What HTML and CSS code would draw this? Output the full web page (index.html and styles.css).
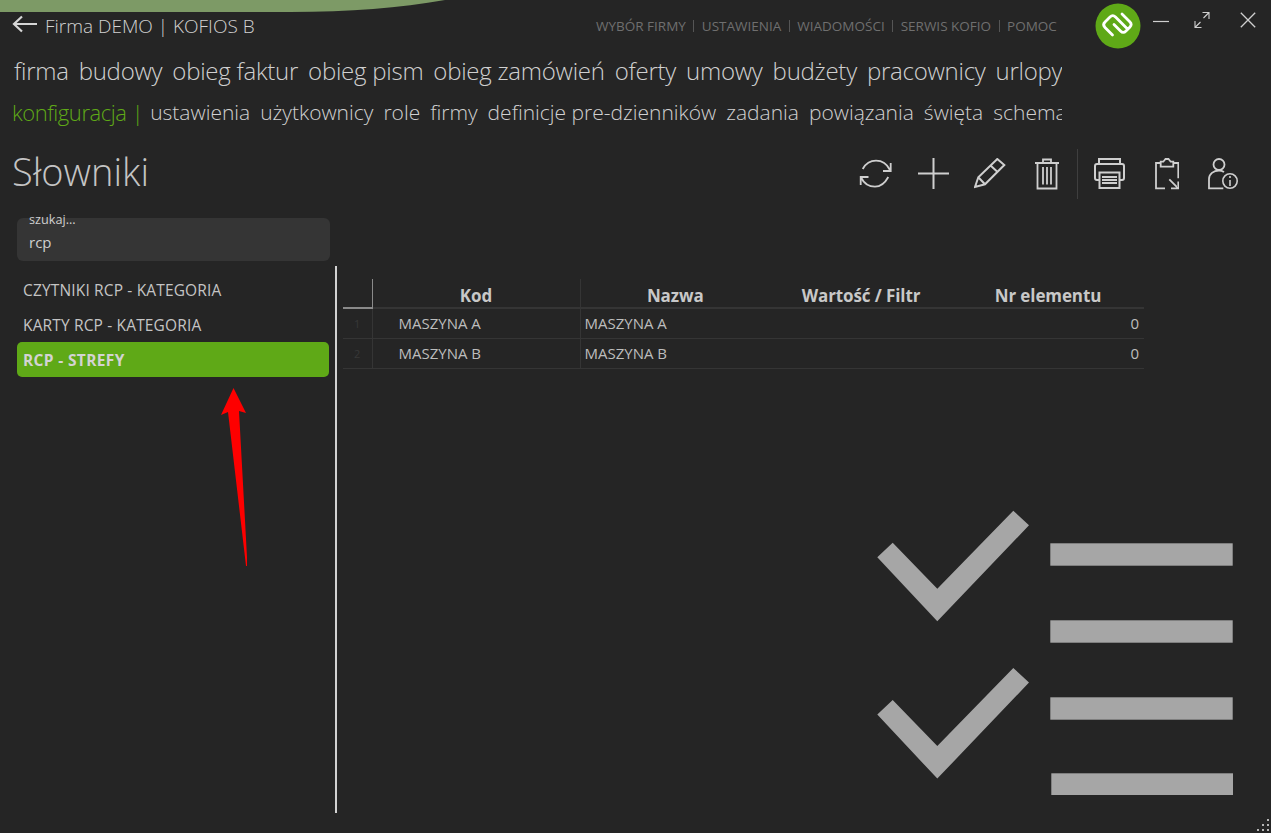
FILE: index.html
```html
<!DOCTYPE html>
<html lang="pl">
<head>
    <meta charset="UTF-8">
    <title>Słowniki</title>
    <link rel="stylesheet" href="styles.css">
</head>
<body>
    <div class="app">
        <svg class="top-arc" viewBox="0 0 445 12" width="445" height="12">
            <path d="M0 0H445C400 8 350 12 290 12H0Z" fill="#7d9a66"/>
        </svg>

        <header class="title-bar">
            <div class="company">
                <svg class="back-icon" viewBox="0 0 26 18" width="26" height="18">
                    <path d="M25 9H2M10 1.500 2 9l8 7.500" fill="none" stroke="#d6d6d6" stroke-width="2.200"/>
                </svg>
                <span class="company-name">Firma DEMO | KOFIOS B</span>
            </div>
            <nav class="top-links">
                <a>WYBÓR FIRMY</a><i></i>
                <a>USTAWIENIA</a><i></i>
                <a>WIADOMOŚCI</a><i></i>
                <a>SERWIS KOFIO</a><i></i>
                <a>POMOC</a>
            </nav>
            <div class="logo">
                <svg viewBox="0 0 46 46" width="46" height="46">
                    <circle cx="23" cy="23" r="22.500" fill="#5fa917"/>
                    <path d="M17.500 32 10 24.500Q7.250 21.750 10 19L15 14Q17.750 11.250 20.500 14L32 25.500M19 21.500 25.500 28Q28.250 30.750 31 28L34.750 24.250Q37.500 21.500 34.750 18.750L27 11" fill="none" stroke="#fff" stroke-width="2.800" stroke-linecap="round"/>
                </svg>
            </div>
            <div class="window-btns">
                <svg viewBox="0 0 16 16" width="16" height="16"><path d="M0 9.500H16" stroke="#cfcfcf" stroke-width="1.200"/></svg>
                <svg viewBox="0 0 16 16" width="16" height="16"><path d="M1 9v6.500h6.500M15 7V.5H8.500M1.500 15l5-5M14.500 1l-5 5" fill="none" stroke="#cfcfcf" stroke-width="1.100"/></svg>
                <svg class="btn-close" viewBox="0 0 16 16" width="16" height="16"><path d="M.8.8l14.400 14.400M15.200.8.8 15.200" stroke="#cfcfcf" stroke-width="1.300"/></svg>
            </div>
        </header>

        <nav class="menu menu-main">
            <a>firma</a><a>budowy</a><a>obieg faktur</a><a>obieg pism</a><a>obieg zamówień</a><a>oferty</a><a>umowy</a><a>budżety</a><a>pracownicy</a><a>urlopy</a>
        </nav>
        <nav class="menu menu-sub">
            <span class="menu-current">konfiguracja |</span><a>ustawienia</a><a>użytkownicy</a><a>role</a><a>firmy</a><a>definicje pre-dzienników</a><a>zadania</a><a>powiązania</a><a>święta</a><a>schematy</a>
        </nav>

        <div class="page-head">
            <h1>Słowniki</h1>
            <div class="toolbar">
                <svg class="tool-refresh" viewBox="0 0 33 32" width="33" height="32"><path d="M3.700 11C7 5 12 2.700 17 2.700 23 2.700 28 6 31 12M31.700 5V13H24M29.300 19C26 25 21 28.700 16 28.700 10 28.700 5 25.500 2 19.500M1.700 27V19H9.500" fill="none" stroke="#cfcfcf" stroke-width="1.800"/></svg>
                <svg class="tool-add" viewBox="0 0 31 32" width="31" height="32"><path d="M15.500 0V31M0 15.500H31" stroke="#cfcfcf" stroke-width="2"/></svg>
                <svg class="tool-edit" viewBox="0 0 32 32" width="32" height="32"><path d="M1 29 4.300 19.300 23.300 1 30.300 7 11 26.300ZM4.300 19.300 11 26.300M16 7 23.300 13.700" fill="none" stroke="#cfcfcf" stroke-width="2"/></svg>
                <svg class="tool-delete" viewBox="0 0 24 32" width="24" height="32"><path d="M0 5H24M8 5V1.500H16V5M2.500 5V30.500H21.500V5M8 9V26.500M12 9V26.500M16 9V26.500" fill="none" stroke="#cfcfcf" stroke-width="1.800"/></svg>
                <span class="toolbar-sep"></span>
                <svg class="tool-print" viewBox="0 0 31 32" width="31" height="32"><path d="M5 6V1H26V6M5 22H3A2 2 0 0 1 1 20V8A2 2 0 0 1 3 6H28A2 2 0 0 1 30 8V20A2 2 0 0 1 28 22H26M5.500 14.500H25.500V30H5.500ZM8 19H23M8 22H23M8 25H23" fill="none" stroke="#cfcfcf" stroke-width="2"/></svg>
                <svg class="tool-export" viewBox="0 0 24 32" width="24" height="32"><path d="M5.700 5H1V30.300H10M18.300 5H23.300V20.300M5.700 8.700V3.700H8.300L10.500 1H13.500L15.700 3.700H18.300V8.700ZM14.300 21.300 23.300 30.300M23.300 23.500V30.300H16" fill="none" stroke="#cfcfcf" stroke-width="1.800"/></svg>
                <svg class="tool-user" viewBox="0 0 30 32" width="30" height="32"><circle cx="11" cy="6.500" r="5.500" fill="none" stroke="#cfcfcf" stroke-width="1.800"/><path d="M15.300 30.300H1V21C1 16 5.500 12.500 11 12.500 13 12.500 14.500 13 16 14" fill="none" stroke="#cfcfcf" stroke-width="1.800"/><circle cx="22" cy="23" r="7.200" fill="none" stroke="#cfcfcf" stroke-width="1.600"/><path d="M22 22V28M22 18V20" stroke="#cfcfcf" stroke-width="1.600"/></svg>
            </div>
        </div>

        <main class="content">
            <div class="search">
                <label>szukaj...</label>
                <span class="search-value">rcp</span>
            </div>
            <div class="panels">
                <ul class="dict-list">
                    <li>CZYTNIKI RCP - KATEGORIA</li>
                    <li>KARTY RCP - KATEGORIA</li>
                    <li class="active">RCP - STREFY</li>
                </ul>
                <div class="divider"></div>
                <section class="grid-area">
                    <table class="grid">
                        <thead>
                            <tr>
                                <th class="col-num"></th>
                                <th class="col-kod">Kod</th>
                                <th class="col-nazwa">Nazwa</th>
                                <th class="col-wartosc">Wartość / Filtr</th>
                                <th class="col-nr">Nr elementu</th>
                            </tr>
                        </thead>
                        <tbody>
                            <tr><td class="col-num">1</td><td class="cell-kod">MASZYNA A</td><td>MASZYNA A</td><td></td><td class="cell-nr">0</td></tr>
                            <tr><td class="col-num">2</td><td class="cell-kod">MASZYNA B</td><td>MASZYNA B</td><td></td><td class="cell-nr">0</td></tr>
                        </tbody>
                    </table>
                </section>
            </div>
        </main>

        <!-- decoration in the corner of the window -->
        <svg class="watermark" viewBox="0 0 356 286" width="356" height="286">
            <path d="M.3 47.300 15.700 32.700 60.300 78.700 136.300.7 152 15.300 60.300 111.300ZM.3 204.600 15.700 190 60.300 236 136.300 158 152 172.600 60.300 268.600Z" fill="#a6a6a6"/>
            <rect x="173.300" y="33.300" width="182.400" height="22.400" fill="#a6a6a6"/>
            <rect x="173.300" y="110.300" width="182.400" height="22.400" fill="#a6a6a6"/>
            <rect x="173.300" y="187.300" width="182.400" height="22.400" fill="#a6a6a6"/>
            <rect x="174.300" y="263.300" width="181.700" height="21.700" fill="#a6a6a6"/>
        </svg>

        <svg class="arrow" viewBox="0 0 26 180" width="26" height="180">
            <path d="M12.500 0 25 25 18 23 26.500 178 25 178 7 24 0 27z" fill="#fe0000"/>
        </svg>

        <svg class="resize-grip" viewBox="0 0 14 14" width="14" height="14">
            <path d="M11 2h2v2h-2zM6 7h2v2H6zM11 7h2v2h-2zM1 12h2v2H1zM6 12h2v2H6zM11 12h2v2h-2z" fill="#b5b5b5"/>
        </svg>
    </div>
</body>
</html>
```

FILE: styles.css
```css
* {
    box-sizing: border-box;
}
html, body {
    margin: 0;
    height: 100%;
}
body {
    font-family: 'Open Sans', 'Noto Sans', sans-serif;
    background-color: #252525;
    color: #cfcfcf;
}
.app {
    position: relative;
    width: 1271px;
    height: 833px;
    overflow: hidden;
    background-color: #252525;
}
.top-arc {
    position: absolute;
    left: 0;
    top: 0;
}
.title-bar {
    display: flex;
    align-items: flex-start;
    height: 51px;
    padding-top: 3px;
}
.company {
    display: flex;
    align-items: center;
    width: 590px;
    height: 46px;
    padding-left: 12px;
}
.back-icon {
    margin-top: -5px;
}
.company-name {
    margin-left: 7px;
    font-size: 19px;
    font-weight: 300;
    color: #d2d2d2;
}
.top-links {
    display: flex;
    align-items: center;
    width: 505px;
    height: 46px;
    padding-left: 6px;
    font-size: 13.500px;
    color: #6f6f6f;
}
.top-links i {
    width: 1px;
    height: 12px;
    margin: 0 7.500px;
    background-color: #555;
}
.logo {
    height: 46px;
}
.window-btns {
    display: flex;
    gap: 25px;
    padding: 9px 0 0 12px;
}
.btn-close {
    margin-left: 5px;
}
.menu {
    display: flex;
    gap: 10px;
    width: 1062px;
    white-space: nowrap;
    overflow: hidden;
    font-weight: 300;
    line-height: 40px;
    color: #d0d0d0;
}
.menu-main {
    height: 41px;
    padding-left: 14px;
    font-size: 24px;
    letter-spacing: -0.25px;
}
.menu-sub {
    height: 40px;
    padding-left: 12px;
    font-size: 21px;
}
.menu-current {
    margin-right: -3px;
    color: #5fa917;
    font-size: 22px;
    letter-spacing: -0.45px;
}
.page-head {
    display: flex;
    justify-content: space-between;
    height: 86px;
    padding: 17px 0 0 12px;
}
h1 {
    margin: -2px 0 0;
    font-size: 38px;
    font-weight: 300;
    line-height: 48px;
    color: #c4c4c4;
}
.toolbar {
    display: flex;
    align-items: center;
    height: 50px;
    padding-right: 33px;
}
.tool-add {
    margin-left: 26px;
}
.tool-edit {
    margin-left: 25px;
}
.tool-delete {
    margin-left: 29px;
}
.toolbar-sep {
    width: 1px;
    height: 50px;
    margin: 0 16px 0 18px;
    background-color: #3f3f3f;
}
.tool-export {
    margin-left: 30px;
}
.tool-user {
    margin-left: 29px;
}
.search {
    position: relative;
    width: 313px;
    height: 43px;
    margin-left: 17px;
    padding: 13px 12px 0;
    background-color: #353535;
    border-radius: 6px;
}
.search label {
    position: absolute;
    left: 12px;
    top: -8px;
    font-size: 12.700px;
    color: #cfcfcf;
}
.search-value {
    font-size: 15px;
    line-height: 20px;
}
.panels {
    display: flex;
    height: 547px;
    margin-top: 5px;
}
.dict-list {
    list-style: none;
    width: 318px;
    margin: 6px 0 0 17px;
    padding: 0 6px 0 0;
}
.dict-list li {
    height: 35px;
    padding-left: 6px;
    font-size: 15.500px;
    letter-spacing: 0.15px;
    line-height: 37px;
    color: #c4c4c4;
}
.dict-list .active {
    background-color: #5fa917;
    border-radius: 5px;
    font-weight: 700;
    letter-spacing: 0.35px;
    color: #d3d3d3;
}
.divider {
    width: 2px;
    background-color: #d2d2d2;
}
.grid-area {
    padding: 13px 0 0 6px;
}
.grid {
    width: 801px;
    border-collapse: collapse;
    table-layout: fixed;
    font-size: 15px;
    color: #bdbdbd;
}
.grid th {
    height: 29px;
    padding: 5px 0 0;
    font-size: 17px;
    font-weight: 700;
    letter-spacing: -0.1px;
    color: #c8c8c8;
    border-bottom: 2px solid #353535;
    text-align: center;
}
.grid td {
    height: 30px;
    padding: 0 4px;
    border-bottom: 1px solid #353535;
}
.grid .col-num {
    width: 29px;
    padding: 0;
    font-size: 11px;
    color: #383838;
    text-align: center;
    border-right: 1px solid #353535;
}
.grid th.col-num {
    border-right: 1px solid #8a8a8a;
    border-bottom: 2px solid #8a8a8a;
}
.col-kod {
    width: 208px;
    border-right: 1px solid #353535;
}
.grid .cell-kod {
    padding-left: 26px;
    border-right: 1px solid #353535;
}
.col-nazwa {
    width: 190px;
}
.col-wartosc {
    width: 182px;
}
.grid .cell-nr {
    padding-right: 5px;
    text-align: right;
}
.watermark {
    position: absolute;
    left: 877px;
    top: 510px;
}
.arrow {
    position: absolute;
    left: 221px;
    top: 388px;
}
.resize-grip {
    position: absolute;
    right: 1px;
    bottom: 2px;
}
```
